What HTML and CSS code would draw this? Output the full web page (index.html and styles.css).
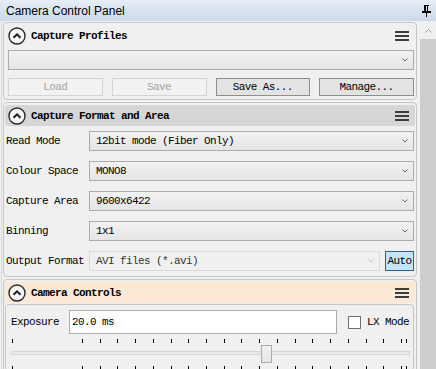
FILE: index.html
```html
<!DOCTYPE html>
<html lang="en">
<head>
  <meta charset="UTF-8">
  <title>Camera Control Panel</title>
  <link rel="stylesheet" href="styles.css">
</head>
<body>

  <div class="titlebar">
    <span class="title">Camera Control Panel</span>
    <svg class="pin" width="9" height="12" viewBox="0 0 9 12">
      <path d="M2 0h5v1H6v5H5V1H4v5H2z" fill="#000"/>
      <rect x="0" y="6" width="9" height="2" fill="#000"/>
      <rect x="4" y="8" width="1" height="4" fill="#000"/>
    </svg>
  </div>

  <div class="main">
    <div class="panel">

      <!-- Capture Profiles -->
      <div class="group">
        <div class="group-head">
          <svg class="toggle" width="18" height="18" viewBox="0 0 18 18">
            <circle cx="9" cy="9" r="8" fill="#f7f7f7" stroke="#2b2b2b" stroke-width="1.4"/>
            <path d="M5.5 10.8L9 7.3l3.5 3.5" fill="none" stroke="#1e1e1e" stroke-width="2"/>
          </svg>
          <span class="group-title">Capture Profiles</span>
          <svg class="menu" width="14" height="10" viewBox="0 0 14 10">
            <rect y="0" width="14" height="2" fill="#3c3c3c"/>
            <rect y="4" width="14" height="2" fill="#3c3c3c"/>
            <rect y="8" width="14" height="2" fill="#3c3c3c"/>
          </svg>
        </div>
        <div class="profiles">
          <div class="combo">
            <span class="combo-text"></span>
            <svg class="chev" width="6" height="4" viewBox="0 0 6 4"><path d="M0.5 0.5L3 3l2.5-2.5" fill="none" stroke="#666"/></svg>
          </div>
          <div class="btn-row">
            <button class="btn" disabled>Load</button>
            <button class="btn" disabled>Save</button>
            <button class="btn">Save As...</button>
            <button class="btn">Manage...</button>
          </div>
        </div>
      </div>

      <!-- Capture Format and Area -->
      <div class="group">
        <div class="group-head grey">
          <svg class="toggle" width="18" height="18" viewBox="0 0 18 18">
            <circle cx="9" cy="9" r="8" fill="#f7f7f7" stroke="#2b2b2b" stroke-width="1.4"/>
            <path d="M5.5 10.8L9 7.3l3.5 3.5" fill="none" stroke="#1e1e1e" stroke-width="2"/>
          </svg>
          <span class="group-title">Capture Format and Area</span>
          <svg class="menu" width="14" height="10" viewBox="0 0 14 10">
            <rect y="0" width="14" height="2" fill="#3c3c3c"/>
            <rect y="4" width="14" height="2" fill="#3c3c3c"/>
            <rect y="8" width="14" height="2" fill="#3c3c3c"/>
          </svg>
        </div>
        <div class="rows">
          <div class="row">
            <span class="label">Read Mode</span>
            <div class="combo">
              <span class="combo-text">12bit mode (Fiber Only)</span>
              <svg class="chev" width="6" height="4" viewBox="0 0 6 4"><path d="M0.5 0.5L3 3l2.5-2.5" fill="none" stroke="#666"/></svg>
            </div>
          </div>
          <div class="row">
            <span class="label">Colour Space</span>
            <div class="combo">
              <span class="combo-text">MONO8</span>
              <svg class="chev" width="6" height="4" viewBox="0 0 6 4"><path d="M0.5 0.5L3 3l2.5-2.5" fill="none" stroke="#666"/></svg>
            </div>
          </div>
          <div class="row">
            <span class="label">Capture Area</span>
            <div class="combo">
              <span class="combo-text">9600x6422</span>
              <svg class="chev" width="6" height="4" viewBox="0 0 6 4"><path d="M0.5 0.5L3 3l2.5-2.5" fill="none" stroke="#666"/></svg>
            </div>
          </div>
          <div class="row">
            <span class="label">Binning</span>
            <div class="combo">
              <span class="combo-text">1x1</span>
              <svg class="chev" width="6" height="4" viewBox="0 0 6 4"><path d="M0.5 0.5L3 3l2.5-2.5" fill="none" stroke="#666"/></svg>
            </div>
          </div>
          <div class="row">
            <span class="label">Output Format</span>
            <div class="combo-line">
              <div class="combo disabled">
                <span class="combo-text">AVI files (*.avi)</span>
                <svg class="chev" width="6" height="4" viewBox="0 0 6 4"><path d="M0.5 0.5L3 3l2.5-2.5" fill="none" stroke="#c2c2c2"/></svg>
              </div>
              <button class="auto">Auto</button>
            </div>
          </div>
        </div>
      </div>

      <!-- Camera Controls -->
      <div class="group">
        <div class="group-head peach">
          <svg class="toggle" width="18" height="18" viewBox="0 0 18 18">
            <circle cx="9" cy="9" r="8" fill="#f7f7f7" stroke="#2b2b2b" stroke-width="1.4"/>
            <path d="M5.5 10.8L9 7.3l3.5 3.5" fill="none" stroke="#1e1e1e" stroke-width="2"/>
          </svg>
          <span class="group-title">Camera Controls</span>
          <svg class="menu" width="14" height="10" viewBox="0 0 14 10">
            <rect y="0" width="14" height="2" fill="#3c3c3c"/>
            <rect y="4" width="14" height="2" fill="#3c3c3c"/>
            <rect y="8" width="14" height="2" fill="#3c3c3c"/>
          </svg>
        </div>
        <div class="inner-box">
          <div class="exposure-row">
            <span class="exp-label">Exposure</span>
            <div class="textbox">20.0 ms</div>
            <span class="checkbox"></span>
            <span class="check-label">LX Mode</span>
          </div>
          <div class="slider">
            <div class="ticks">
              <span class="tick"></span>
              <div class="tick-run">
                <span class="tick"></span><span class="tick"></span><span class="tick"></span><span class="tick"></span>
                <span class="tick"></span><span class="tick"></span><span class="tick"></span><span class="tick"></span>
                <span class="tick"></span><span class="tick"></span><span class="tick"></span><span class="tick"></span>
                <span class="tick"></span><span class="tick"></span><span class="tick"></span><span class="tick"></span>
                <span class="tick"></span><span class="tick"></span><span class="tick"></span>
              </div>
              <span class="tick last"></span>
            </div>
            <div class="track"></div>
            <div class="ticks">
              <span class="tick"></span>
              <div class="tick-run">
                <span class="tick"></span><span class="tick"></span><span class="tick"></span><span class="tick"></span>
                <span class="tick"></span><span class="tick"></span><span class="tick"></span><span class="tick"></span>
                <span class="tick"></span><span class="tick"></span><span class="tick"></span><span class="tick"></span>
                <span class="tick"></span><span class="tick"></span><span class="tick"></span><span class="tick"></span>
                <span class="tick"></span><span class="tick"></span><span class="tick"></span>
              </div>
              <span class="tick last"></span>
            </div>
            <div class="thumb" style="left: 250px;"></div>
          </div>
        </div>
      </div>

    </div>

    <div class="scrollbar">
      <div class="sb-up">
        <svg width="7" height="4" viewBox="0 0 7 4"><path d="M0.5 3.5L3.5 0.5l3 3" fill="none" stroke="#9a9a9a"/></svg>
      </div>
      <div class="sb-thumb"></div>
    </div>
  </div>

</body>
</html>
```

FILE: styles.css
```css
body {
  margin: 0;
  width: 436px;
  height: 369px;
  overflow: hidden;
  background-color: #f0f0f0;
  font-family: "Liberation Mono", "DejaVu Sans Mono", monospace;
  font-size: 11px;
  letter-spacing: -0.6px;
  color: #000;
}
.titlebar {
  height: 21px;
  display: flex;
  align-items: center;
  padding: 0 5px 0 6px;
  background: linear-gradient(#e6edf6, #cad9eb);
  box-sizing: border-box;
}
.title {
  flex: 1;
  font-family: "Liberation Sans", Arial, sans-serif;
  font-size: 12px;
  letter-spacing: 0;
  color: #000;
}
.pin {
  margin-top: 1px;
}
.main {
  display: flex;
  height: 348px;
  margin-top: 1px;
}
.panel {
  flex: 1;
  display: flex;
  flex-direction: column;
  gap: 2px;
  margin-left: 1px;
  border-left: 1px solid #dadada;
  padding: 0 3px 0 1px;
}
.group {
  border: 1px solid #c6c6c6;
  border-radius: 4px;
  flex-shrink: 0;
}
.group-head {
  height: 21px;
  margin: 2px 1px 0 1px;
  border-radius: 3px;
  display: flex;
  align-items: center;
  padding: 0 6px 0 3px;
}
.group-head.grey {
  background-color: #d6d6d6;
}
.group-head.peach {
  background-color: #fbe9d5;
}
.toggle {
  margin-right: 5px;
}
.group-title {
  flex: 1;
  font-weight: bold;
}
.profiles {
  padding: 4px 2px 3px 4px;
}
.combo {
  height: 20px;
  box-sizing: border-box;
  border: 1px solid #acacac;
  background: linear-gradient(#f2f2f2, #e5e5e5);
  display: flex;
  align-items: center;
  padding: 0 5px 0 6px;
}
.combo-text {
  flex: 1;
}
.combo.disabled {
  border-color: #d9d9d9;
  background: #f0f0f0;
  color: #333;
}
.btn-row {
  display: grid;
  grid-template-columns: repeat(4, 1fr);
  gap: 9px;
  margin-top: 8px;
}
.btn {
  height: 18px;
  padding: 0;
  font-family: inherit;
  font-size: 11px;
  letter-spacing: -0.6px;
  color: #000;
  background: #e3e3e3;
  border: 1px solid #8e8e8e;
  border-radius: 0;
}
.btn:disabled {
  color: #a3a3a3;
  background: #f2f2f2;
  border-color: #d4d4d4;
}
.rows {
  padding: 0 2px;
}
.row {
  display: grid;
  grid-template-columns: 83px 1fr;
  height: 30px;
  align-items: center;
}
.combo-line {
  display: flex;
  gap: 5px;
}
.combo-line .combo {
  flex: 1;
}
.auto {
  width: 29px;
  height: 20px;
  padding: 0;
  font-family: inherit;
  font-size: 11px;
  letter-spacing: -0.6px;
  color: #000;
  background: #c5e4f6;
  border: 1px solid #2c628b;
  border-radius: 0;
}
.inner-box {
  margin: 1px 2px 3px 1px;
  border: 1px solid #c6c6c6;
  border-radius: 4px;
  padding: 5px 3px 0 5px;
}
.exposure-row {
  display: flex;
  align-items: center;
  height: 24px;
}
.exp-label {
  width: 58px;
}
.textbox {
  width: 268px;
  height: 24px;
  box-sizing: border-box;
  border: 1px solid #acacac;
  background: #fff;
  padding-left: 2px;
  line-height: 22px;
}
.checkbox {
  width: 13px;
  height: 13px;
  box-sizing: border-box;
  border: 1px solid #707070;
  background: #fff;
  margin-left: 11px;
}
.check-label {
  margin-left: 6px;
}
.slider {
  position: relative;
  margin-top: 5px;
}
.ticks {
  display: flex;
  height: 4px;
  padding-left: 1px;
}
.tick {
  width: 1px;
  height: 4px;
  background: #000;
}
.tick-run {
  display: flex;
  justify-content: space-between;
  width: 320px;
  margin-left: 69px;
}
.tick.last {
  margin-left: 4px;
}
.track {
  height: 4px;
  box-sizing: border-box;
  margin: 8px 0 11px 0;
  background: #e7eaea;
  border: 1px solid #d6d6d6;
}
.thumb {
  position: absolute;
  top: 6px;
  width: 11px;
  height: 18px;
  box-sizing: border-box;
  background: linear-gradient(#f0f0f0, #e5e5e5);
  border: 1px solid #acacac;
}
.scrollbar {
  width: 16px;
  display: flex;
  flex-direction: column;
}
.sb-up {
  height: 17px;
  display: flex;
  align-items: center;
  justify-content: center;
  background: #f0f0f0;
}
.sb-thumb {
  flex: 1;
  background: #cdcdcd;
}
```
